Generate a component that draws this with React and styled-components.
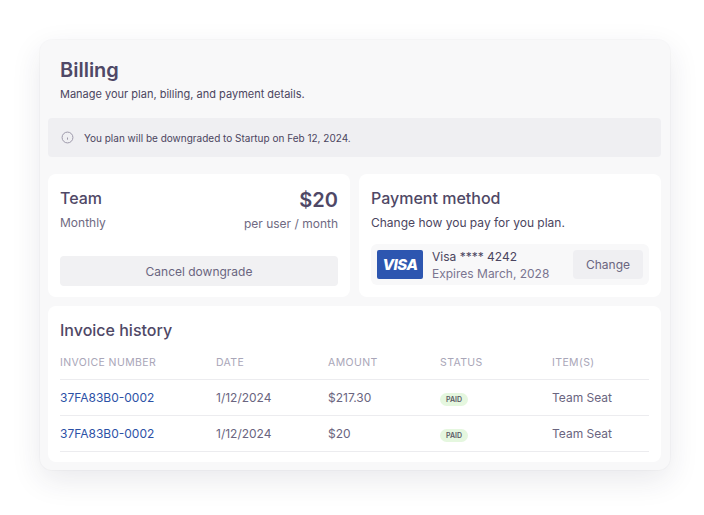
import React from "react";
import styled, { createGlobalStyle } from "styled-components";

const G = createGlobalStyle`
  body{margin:0;background:#fff;font-family:Inter,"Noto Sans",sans-serif;color:#4b4560;}
`;
const Page = styled.div`width:704px;height:515px;padding:40px 34px 0 40px;box-sizing:border-box;`;
const Shell = styled.div`
  width:630px;height:430px;box-sizing:border-box;background:#f8f8f9;border-radius:12px;
  box-shadow:0 10px 30px rgba(40,40,70,.10),0 0 0 1px rgba(0,0,0,.02);padding:17px 9px 8px 8px;
  display:flex;flex-direction:column;
`;
const Head = styled.div`padding:0 12px;`;
const Title = styled.h1`margin:0;font-size:20px;font-weight:600;color:#4f4866;line-height:26px;`;
const Sub = styled.p`margin:4px 0 0;font-size:11px;color:#4b4560;line-height:14px;`;
const Alert = styled.div`margin-top:17px;height:39px;background:#efeff2;border-radius:4px;display:flex;align-items:center;gap:10px;padding:0 13px;font-size:10px;color:#4b4560;`;
const Row = styled.div`display:flex;gap:9px;margin-top:17px;`;
const Card = styled.div`background:#fff;border-radius:8px;padding:${p=>p.pad||"14px 12px 12px"};box-sizing:border-box;flex:${p=>p.flex||"1"};height:${p=>p.h}px;margin-top:${p=>p.mt||0}px;`;
const Split = styled.div`display:flex;justify-content:space-between;`;
const H2 = styled.div`font-size:16px;font-weight:500;color:#4f4866;line-height:20px;`;
const Price = styled.div`font-size:20px;font-weight:600;color:#4f4866;line-height:24px;text-align:right;`;
const Muted = styled.div`font-size:12px;color:#6f6a82;margin-top:${p=>p.mt||4}px;text-align:${p=>p.right?"right":"left"};`;
const Btn = styled.div`margin-top:25px;height:30px;border-radius:4px;background:#f1f1f3;display:flex;align-items:center;justify-content:center;font-size:12px;color:#6a6580;`;
const Desc = styled.div`font-size:12px;color:#4b4560;margin-top:7px;`;
const PayBox = styled.div`margin-top:14px;height:41px;background:#f8f8f9;border-radius:6px;display:flex;align-items:center;padding:0 6px;gap:9px;`;
const Visa = styled.div`width:46px;height:29px;background:#2d56b0;border-radius:2px;color:#fff;font-weight:800;font-style:italic;font-size:15px;display:flex;align-items:center;justify-content:center;letter-spacing:-.5px;`;
const CardInfo = styled.div`flex:1;font-size:12px;line-height:17px;color:#4b4560;`;
const Exp = styled.div`color:#7a7590;`;
const Change = styled.div`width:70px;height:29px;background:#efeff2;border-radius:4px;display:flex;align-items:center;justify-content:center;font-size:12px;color:#6a6580;`;
const Table = styled.div`margin-top:5px;`;
const TR = styled.div`display:grid;grid-template-columns:156px 112px 112px 112px 1fr;height:${p=>p.h}px;align-items:center;border-bottom:1px solid #ececef;`;
const TH = styled.div`font-size:10.5px;color:#a9a6b8;letter-spacing:.4px;`;
const TD = styled.div`font-size:12px;color:${p=>p.link?"#2c51a6":"#6a6580"};`;
const Paid = styled.span`display:inline-block;background:#e5f7df;color:#5b5a66;font-size:7px;padding:2px 6px;border-radius:8px;font-weight:600;`;

const Info = () => (
  <svg width="13" height="13" viewBox="0 0 24 24" fill="none" stroke="#9a96a8" strokeWidth="1.8"><circle cx="12" cy="12" r="10"/><path d="M12 16v-4M12 8h.01"/></svg>
);

const rows = [["37FA83B0-0002","1/12/2024","$217.30"],["37FA83B0-0002","1/12/2024","$20"]];

export default function App(){
  return <Page><G/><Shell>
    <Head><Title>Billing</Title><Sub>Manage your plan, billing, and payment details.</Sub></Head>
    <Alert><Info/>You plan will be downgraded to Startup on Feb 12, 2024.</Alert>
    <Row>
      <Card h={123}>
        <Split><div><H2>Team</H2><Muted mt={7}>Monthly</Muted></div>
        <div><Price>$20</Price><Muted right mt={4}>per user / month</Muted></div></Split>
        <Btn>Cancel downgrade</Btn>
      </Card>
      <Card h={123}>
        <H2>Payment method</H2>
        <Desc>Change how you pay for you plan.</Desc>
        <PayBox><Visa>VISA</Visa><CardInfo>Visa **** 4242<Exp>Expires March, 2028</Exp></CardInfo><Change>Change</Change></PayBox>
      </Card>
    </Row>
    <Card h={156} flex="none" mt={9}>
      <H2>Invoice history</H2>
      <Table>
        <TR h={34}><TH>INVOICE NUMBER</TH><TH>DATE</TH><TH>AMOUNT</TH><TH>STATUS</TH><TH>ITEM(S)</TH></TR>
        {rows.map((r,i)=><TR key={i} h={35}><TD link>{r[0]}</TD><TD>{r[1]}</TD><TD>{r[2]}</TD><TD><Paid>PAID</Paid></TD><TD>Team Seat</TD></TR>)}
      </Table>
    </Card>
  </Shell></Page>;
}
